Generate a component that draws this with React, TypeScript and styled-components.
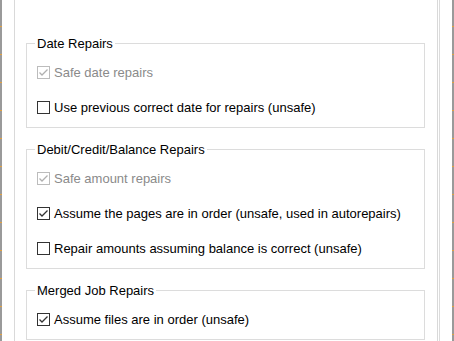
import React from "react";
import styled, { createGlobalStyle } from "styled-components";

const GlobalStyle = createGlobalStyle`
  html, body { margin: 0; padding: 0; background: #ffffff; }
  body { font-family: "Liberation Sans", Arial, sans-serif; font-size: 13px; color: #000; }
`;

const Window = styled.div`
  display: flex;
  width: 454px;
  height: 341px;
  overflow: hidden;
  background: #ffffff;
`;

const Edge = styled.div`
  width: 2px;
  flex: none;
  background: repeating-linear-gradient(
    to bottom,
    #9a9a9a 0px,
    #9a9a9a 26px,
    #e0a040 26px,
    #e0a040 27px,
    #9a9a9a 27px,
    #9a9a9a 28px
  );
`;

const TabControl = styled.div`
  flex: 1;
  display: flex;
  padding: 0 1px 0 12px;
  border-right: 1px solid #dcdcdc;
  margin-right: 12px;
`;

const TabPage = styled.div`
  flex: 1;
  display: flex;
  flex-direction: column;
  gap: 14px;
  padding: 36px 12px 0 11px;
  border-left: 1px solid #d9d9d9;
  border-right: 1px solid #d9d9d9;
`;

const Group = styled.fieldset`
  margin: 0;
  padding: 0 0 2px 0;
  border: 1px solid #dcdcdc;
  min-width: 0;
`;

const Legend = styled.legend`
  margin-left: 8px;
  padding: 0 2px;
  line-height: 15px;
  font-size: 13px;
  color: #000;
`;

const Row = styled.label<{ $disabled?: boolean }>`
  display: flex;
  align-items: center;
  height: 35px;
  padding-left: 10px;
  gap: 4px;
  color: ${(p) => (p.$disabled ? "#8a8a8a" : "#000")};
  white-space: nowrap;
`;

const Box = styled.span<{ $disabled?: boolean }>`
  width: 13px;
  height: 13px;
  box-sizing: border-box;
  border: 1px solid ${(p) => (p.$disabled ? "#bcbcbc" : "#333333")};
  background: #fff;
  display: flex;
  align-items: center;
  justify-content: center;
  flex: none;
`;

const Rows = styled.div`
  display: flex;
  flex-direction: column;
  padding-top: 4px;
`;

function Check({ checked, disabled, label }: { checked: boolean; disabled?: boolean; label: string }) {
  return (
    <Row $disabled={disabled}>
      <Box $disabled={disabled}>
        {checked && (
          <svg width="11" height="11" viewBox="0 0 11 11">
            <polyline
              points="1.5,5.5 4,8 9.5,2.5"
              fill="none"
              stroke={disabled ? "#b0b0b0" : "#333333"}
              strokeWidth="1.3"
            />
          </svg>
        )}
      </Box>
      <span>{label}</span>
    </Row>
  );
}

export default function App() {
  return (
    <>
      <GlobalStyle />
      <Window>
        <Edge />
        <TabControl>
          <TabPage>
            <Group>
              <Legend>Date Repairs</Legend>
              <Rows>
                <Check checked disabled label="Safe date repairs" />
                <Check checked={false} label="Use previous correct date for repairs (unsafe)" />
              </Rows>
            </Group>
            <Group>
              <Legend>Debit/Credit/Balance Repairs</Legend>
              <Rows>
                <Check checked disabled label="Safe amount repairs" />
                <Check checked label="Assume the pages are in order (unsafe, used in autorepairs)" />
                <Check checked={false} label="Repair amounts assuming balance is correct (unsafe)" />
              </Rows>
            </Group>
            <Group>
              <Legend>Merged Job Repairs</Legend>
              <Rows>
                <Check checked label="Assume files are in order (unsafe)" />
              </Rows>
            </Group>
          </TabPage>
        </TabControl>
        <Edge />
      </Window>
    </>
  );
}
